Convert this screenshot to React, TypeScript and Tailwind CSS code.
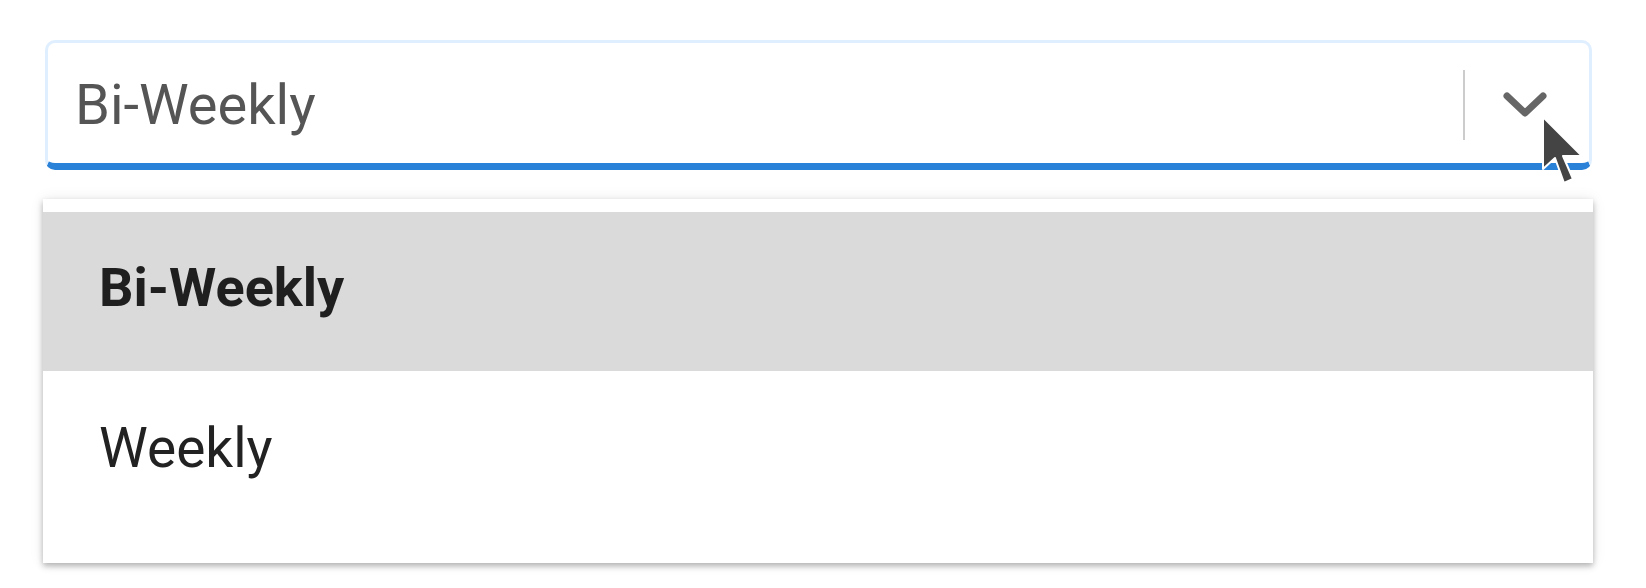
import { useState } from 'react';

const options = ['Bi-Weekly', 'Weekly'];

export default function App() {
  const [selected] = useState('Bi-Weekly');

  return (
    <div className="w-[1646px] h-[588px] bg-white font-['Roboto',sans-serif] pt-[40px] pl-[43px]">
      <div className="relative w-[1549px]">
        <div className="ml-[2px] w-[1547px] h-[130px] flex items-center bg-white border-[3px] border-[#e0efff] border-b-[7px] border-b-[#2a81d8] rounded-[10px] pr-[22px] pt-[3px]">
          <span className="flex-1 pl-[27px] text-[56px] leading-none text-[#555555]">{selected}</span>
          <div className="w-[2px] h-[70px] bg-[#cccccc]" />
          <div className="w-[102px] flex justify-center pl-[18px]">
            <svg width="46" height="30" viewBox="0 0 46 30">
              <path d="M5 6 L23 23 L41 6" fill="none" stroke="#666666" strokeWidth="7" strokeLinecap="round" strokeLinejoin="round" />
            </svg>
          </div>
        </div>

        <svg className="absolute left-[1498px] top-[75px]" width="44" height="74" viewBox="-2 -2 44 74">
          <path d="M0 0 L0 52 L12 41 L21 66 L30 62 L20 39 L39 39 Z" fill="#444444" stroke="#ffffff" strokeWidth="2" strokeLinejoin="round" />
        </svg>

        <div className="mt-[29px] w-[1550px] h-[364px] bg-white pt-[13px] shadow-[0_3px_6px_rgba(0,0,0,0.28),0_0_14px_rgba(0,0,0,0.08)]">
          {options.map((opt) => (
            <div
              key={opt}
              className={
                opt === selected
                  ? 'h-[159px] flex items-center pl-[56px] pb-[9px] bg-[#dadada] text-[54px] font-bold text-[#1f1f1f]'
                  : 'h-[159px] flex items-center pl-[56px] pb-[4px] bg-white text-[55px] text-[#222222]'
              }
            >
              {opt}
            </div>
          ))}
        </div>
      </div>
    </div>
  );
}
